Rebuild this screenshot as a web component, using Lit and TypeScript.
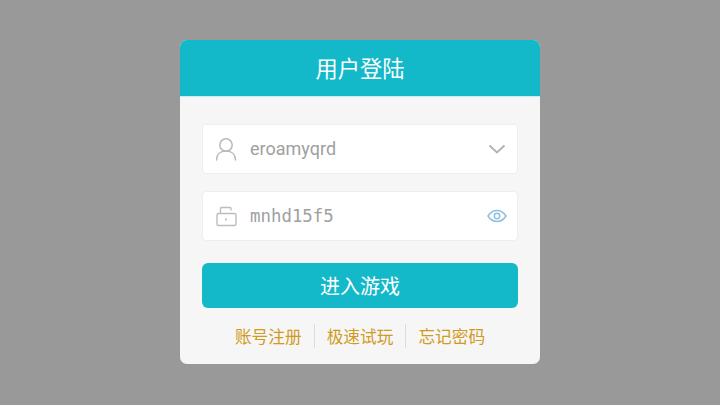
import { LitElement, html, css } from "lit";
import { customElement } from "lit/decorators.js";

@customElement("app-root")
export class AppRoot extends LitElement {
  static styles = css`
    :host {
      display: block;
      width: 720px;
      height: 405px;
      background: #999999;
      overflow: hidden;
      padding-top: 40px;
      box-sizing: border-box;
      font-family: "Noto Sans CJK SC", Roboto, sans-serif;
    }
    .card {
      width: 360px;
      height: 324px;
      margin: 0 auto;
      background: #f6f6f7;
      border-radius: 7px;
      overflow: hidden;
      display: flex;
      flex-direction: column;
    }
    .head {
      height: 57px;
      padding-bottom: 2px;
      box-sizing: border-box;
      background: #14b9c9;
      border-bottom: 1px solid #c4eef2;
      display: flex;
      align-items: center;
      justify-content: center;
      color: #fff;
      font-size: 22.3px;
    }
    .body {
      display: flex;
      flex-direction: column;
      padding: 27px 22px 0 22px;
    }
    .field {
      height: 50px;
      box-sizing: border-box;
      background: #fff;
      border: 1px solid #eeeeee;
      border-radius: 4px;
      display: flex;
      align-items: center;
      padding: 0 10px 0 11px;
      width: 316px;
    }
    .field + .field {
      margin-top: 17px;
    }
    .ico {
      width: 24px;
      height: 24px;
      flex: none;
      margin-right: 12px;
    }
    .val {
      flex: 1;
      color: #a0a0a0;
      padding-bottom: 1px;
    }
    .user {
      font-family: Roboto, sans-serif;
      font-size: 18px;
    }
    .pass {
      font-family: "DejaVu Sans Mono", monospace;
      font-size: 17.4px;
    }
    .end {
      flex: none;
      display: block;
    }
    .chev {
      margin-right: 1px;
    }
    .btn {
      margin-top: 22px;
      width: 316px;
      height: 45px;
      background: #14b9c9;
      border-radius: 6px;
      color: #fff;
      font-size: 20px;
      display: flex;
      align-items: center;
      justify-content: center;
    }
    .links {
      margin-top: 16px;
      height: 24px;
      display: flex;
      align-items: center;
      justify-content: center;
      color: #d09b1c;
      font-size: 16.7px;
    }
    .links span {
      padding: 0 12px;
      line-height: 24px;
    }
    .links span + span {
      border-left: 1px solid #dcdcdc;
    }
  `;

  render() {
    return html`
      <div class="card">
        <div class="head">用户登陆</div>
        <div class="body">
          <div class="field">
            <svg class="ico" viewBox="0 0 24 24" fill="none" stroke="#b9b9b9" stroke-width="1.5">
              <circle cx="12" cy="8" r="6.2"></circle>
              <path d="M2.5 23c0-5.5 3.5-9 9.5-9s9.5 3.5 9.5 9" stroke-linecap="round"></path>
            </svg>
            <span class="val user">eroamyqrd</span>
            <svg class="end chev" width="18" height="12" viewBox="0 0 18 12" fill="none" stroke="#b4b4b4" stroke-width="2">
              <path d="M1.5 2.500L9 9.500L16.500 2.500"></path>
            </svg>
          </div>
          <div class="field">
            <svg class="ico" viewBox="0 0 24 24" fill="none" stroke="#bdbdbd" stroke-width="1.4">
              <rect x="3" y="9.500" width="19" height="12" rx="1.500"></rect>
              <path d="M6.500 9.500V4.500c0-.6.400-1 1-1h8.500c.6 0 1 .4 1 1V6.500"></path>
              <path d="M12 14.500v2" stroke-width="1.800"></path>
            </svg>
            <span class="val pass">mnhd15f5</span>
            <svg class="end" width="20" height="14" viewBox="0 0 20 14" fill="none" stroke="#8dbfe0" stroke-width="1.500">
              <path d="M1 7C3.500 3.200 6.500 1.500 10 1.500S16.500 3.200 19 7C16.500 10.800 13.500 12.500 10 12.500S3.500 10.800 1 7Z"></path>
              <circle cx="10" cy="7" r="2.700"></circle>
            </svg>
          </div>
          <div class="btn">进入游戏</div>
          <div class="links">
            <span>账号注册</span><span>极速试玩</span><span>忘记密码</span>
          </div>
        </div>
      </div>
    `;
  }
}
